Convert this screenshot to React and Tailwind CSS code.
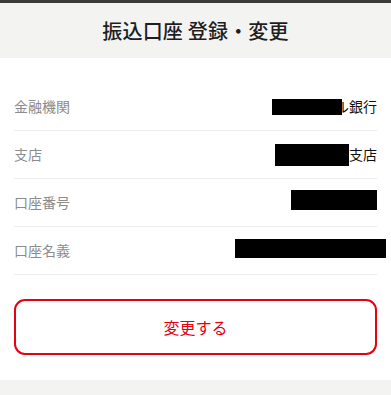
import React from 'react';

const font = { fontFamily: '"Noto Sans CJK JP", "Noto Sans", sans-serif' };

const Redact = ({ className }) => <span className={`inline-block bg-black ${className}`}></span>;

const rows = [
  {
    label: '金融機関',
    value: (
      <span className="flex items-center">
        <Redact className="w-[70px] h-[16px] -mr-[7px] relative z-10" />
        <span>ル銀行</span>
      </span>
    ),
  },
  {
    label: '支店',
    value: (
      <span className="flex items-center">
        <Redact className="w-[74px] h-[22px]" />
        <span>支店</span>
      </span>
    ),
  },
  { label: '口座番号', value: <Redact className="w-[86px] h-[20px]" /> },
  { label: '口座名義', value: <Redact className="w-[151px] h-[19px] -mr-[9px]" /> },
];

const App = () => {
  return (
    <div className="w-[391px] h-[395px] bg-[#f3f3f2] overflow-hidden" style={font}>
      <div className="h-[3px] bg-[#3a3b3a]"></div>
      <header className="h-[55px] flex items-center justify-center">
        <h1 className="text-[20px] font-medium text-[#1e1e1e] tracking-[0.01em]">振込口座 登録・変更</h1>
      </header>
      <section className="bg-white px-[14px] pt-[25px] pb-[25px]">
        {rows.map((row) => (
          <div
            key={row.label}
            className="h-[48px] border-b border-[#ebebeb] flex items-center justify-between text-[14px]"
          >
            <span className="text-[#8c8c8c]">{row.label}</span>
            <span className="text-[#111]">{row.value}</span>
          </div>
        ))}
        <button className="mt-[24px] w-full h-[56px] rounded-[11px] border-2 border-[#e60012] text-[#e60012] text-[16px] bg-white flex items-center justify-center">
          変更する
        </button>
      </section>
    </div>
  );
};

export default App;
